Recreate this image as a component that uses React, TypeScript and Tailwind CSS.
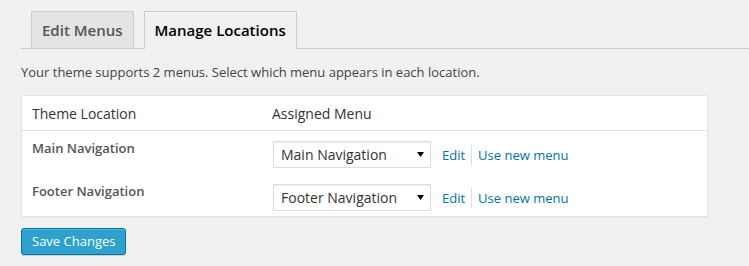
import React from 'react';

const Arrow: React.FC = () => (
    <svg width="7" height="5" viewBox="0 0 7 5" className="shrink-0">
        <polygon points="0,0 7,0 3.5,5" fill="#000" />
    </svg>
);

const FakeSelect: React.FC<{ value: string }> = ({ value }) => (
    <div className="flex items-center justify-between w-[158px] h-[27px] border border-[#ddd] bg-white pl-[7px] pr-[6px] shadow-[inset_0_1px_2px_rgba(0,0,0,0.07)]">
        <span className="text-[14px] text-[#333] leading-none">{value}</span>
        <Arrow />
    </div>
);

const LocationRow: React.FC<{ label: string; menu: string; last?: boolean }> = ({ label, menu, last }) => (
    <div className={`flex ${last ? 'h-[42px]' : 'h-[43px]'}`}>
        <div className="w-[240px] pl-[10px] pt-[7px] text-[13px] leading-[20px] font-semibold text-[#555]">{label}</div>
        <div className="flex items-center h-[27px] mt-[10px] pl-[11px]">
            <FakeSelect value={menu} />
            <a className="ml-[11px] pr-[6px] text-[13px] leading-[20px] text-[#0074a2] border-r border-[#ddd]">Edit</a>
            <a className="ml-[6px] text-[13px] leading-[20px] text-[#0074a2]">Use new menu</a>
        </div>
    </div>
);

export default function App() {
    return (
        <div className="min-h-screen bg-[#f1f1f1] pl-[21px] pt-[11px] font-['Open_Sans',sans-serif]">
            <div className="flex items-end h-[38px] border-b border-[#ccc] pl-[10px] gap-[10px]">
                <div className="h-[37px] px-[10px] border border-b-0 border-[#ccc] bg-[#e4e4e4] text-[15px] leading-[36px] font-semibold text-[#555]">
                    Edit Menus
                </div>
                <div className="h-[38px] -mb-px px-[10px] border border-b-0 border-[#ccc] bg-[#f1f1f1] text-[15px] leading-[36px] font-semibold text-black">
                    Manage Locations
                </div>
            </div>

            <p className="mt-[13px] text-[13px] leading-[20px] text-[#444]">
                Your theme supports 2 menus. Select which menu appears in each location.
            </p>

            <div className="mt-[13px] w-[687px] bg-white border border-[#e5e5e5] shadow-[0_1px_1px_rgba(0,0,0,0.04)]">
                <div className="flex h-[35px] items-center border-b border-[#e1e1e1] text-[14px] text-[#333]">
                    <div className="w-[240px] pl-[10px]">Theme Location</div>
                    <div className="pl-[10px]">Assigned Menu</div>
                </div>
                <LocationRow label="Main Navigation" menu="Main Navigation" />
                <LocationRow label="Footer Navigation" menu="Footer Navigation" last />
            </div>

            <button
                type="button"
                className="mt-[11px] h-[27px] px-[10px] rounded-[3px] border border-[#0074a2] bg-[#2ea2cc] text-[13px] leading-[25px] text-white shadow-[inset_0_1px_0_rgba(120,200,230,0.5),0_1px_0_rgba(0,0,0,0.15)]"
            >
                Save Changes
            </button>
        </div>
    );
}
